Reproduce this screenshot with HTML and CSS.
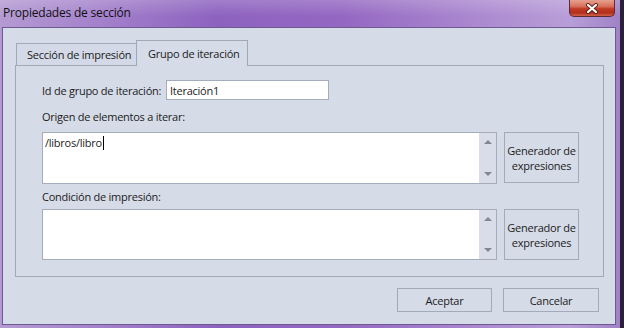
FILE: index.html
```html
<!DOCTYPE html>
<html lang="es">
<head>
    <meta charset="UTF-8">
    <title>Propiedades de sección</title>
    <link rel="stylesheet" href="styles.css">
</head>
<body>
    <div class="window">
        <div class="titlebar">
            <span class="title">Propiedades de sección</span>
            <div class="close">
                <svg width="16" height="11" viewBox="0 0 16 11">
                    <path d="M4 2 L12 9 M12 2 L4 9" stroke="#5a1f1a" stroke-width="4" stroke-linecap="round"/>
                    <path d="M4 2 L12 9 M12 2 L4 9" stroke="#ffffff" stroke-width="2.2" stroke-linecap="round"/>
                </svg>
            </div>
        </div>
        <div class="client">
            <div class="tabs">
                <div class="tab">Sección de impresión</div>
                <div class="tab active">Grupo de iteración</div>
            </div>
            <div class="panel">
                <div class="field-row">
                    <span class="field-label">Id de grupo de iteración:</span>
                    <div class="input">Iteración1</div>
                </div>
                <div class="label first">Origen de elementos a iterar:</div>
                <div class="editor-row tall">
                    <div class="textbox">
                        <div class="text">/libros/libro<span class="caret"></span></div>
                        <div class="scrollbar"><span class="arrow up"></span><span class="arrow down"></span></div>
                    </div>
                    <button class="btn gen">Generador de<br>expresiones</button>
                </div>
                <div class="label second">Condición de impresión:</div>
                <div class="editor-row">
                    <div class="textbox">
                        <div class="text"></div>
                        <div class="scrollbar"><span class="arrow up"></span><span class="arrow down"></span></div>
                    </div>
                    <button class="btn gen">Generador de<br>expresiones</button>
                </div>
            </div>
            <div class="footer">
                <button class="btn ok">Aceptar</button>
                <button class="btn cancel">Cancelar</button>
            </div>
        </div>
    </div>
</body>
</html>
```

FILE: styles.css
```css
body {
    margin: 0;
    background-color: #2a2138;
    font-family: "Open Sans", "Noto Sans", sans-serif;
    font-size: 11px;
    letter-spacing: -0.25px;
    color: #1b1b1b;
    white-space: nowrap;
}
.window {
    width: 620px;
    height: 328px;
    box-sizing: border-box;
    padding: 0 4px 3px 2px;
    display: flex;
    flex-direction: column;
    background: linear-gradient(90deg, #b49ad2 0%, #a583cc 15%, #8d62bf 35%, #9467c2 55%, #ac8ad0 78%, #b89ed8 92%, #9f82c6 100%);
}
.titlebar {
    height: 27px;
    display: flex;
    align-items: flex-start;
    background: linear-gradient(180deg, rgba(255, 255, 255, 0.18), rgba(255, 255, 255, 0) 60%);
    margin: 0 -4px 0 -2px;
}
.title {
    margin: 6px 0 0 3px;
    font-size: 12px;
    letter-spacing: -0.2px;
    line-height: 14px;
    color: #111;
}
.close {
    margin-left: auto;
    margin-right: 5px;
    width: 46px;
    height: 17px;
    box-sizing: border-box;
    border: 1px solid #5d2a35;
    border-top: none;
    border-radius: 0 0 5px 5px;
    background: linear-gradient(180deg, #e6a08e 0%, #d8705a 40%, #c03a22 55%, #b3301c 80%, #d0604a 100%);
    display: flex;
    align-items: center;
    justify-content: center;
}
.client {
    height: 298px;
    box-sizing: border-box;
    border: 1px solid #6e5a92;
    background-color: #d6dbe8;
    display: flex;
    flex-direction: column;
}
.tabs {
    display: flex;
    align-items: flex-end;
    height: 25px;
    margin: 12px 0 0 13px;
    position: relative;
    z-index: 1;
}
.tab {
    height: 22px;
    box-sizing: border-box;
    border: 1px solid #a1a9b8;
    border-bottom: none;
    padding: 3px 0 0 10px;
    width: 120px;
    border-right: none;
    background-color: #d3d9e6;
}
.tab.active {
    width: 112px;
    height: 26px;
    margin-bottom: -1px;
    border-right: 1px solid #a1a9b8;
    padding: 5px 0 0 11px;
    background-color: #d6dbe8;
}
.panel {
    margin: 0 11px 0 12px;
    border: 1px solid #a1a9b8;
    padding: 14px 0 16px 26px;
}
.field-row {
    display: flex;
    align-items: center;
    height: 20px;
}
.field-label {
    width: 124px;
}
.input {
    width: 163px;
    height: 20px;
    box-sizing: border-box;
    border: 1px solid #a5adbc;
    background-color: #fff;
    padding: 2px 0 0 3px;
    line-height: 15px;
}
.label {
    height: 16px;
    line-height: 16px;
}
.label.first {
    margin-top: 9px;
}
.label.second {
    margin-top: 5px;
}
.editor-row {
    display: flex;
    gap: 7px;
    height: 51px;
    margin-top: 4px;
}
.editor-row.tall {
    height: 52px;
    margin-top: 7px;
}
.textbox {
    width: 455px;
    box-sizing: border-box;
    border: 1px solid #a5adbc;
    background-color: #fff;
    display: flex;
}
.text {
    flex: 1;
    padding: 3px 0 0 2px;
    line-height: 14px;
}
.caret {
    display: inline-block;
    width: 1px;
    height: 14px;
    background-color: #000;
    vertical-align: -3px;
    margin-left: 1px;
}
.scrollbar {
    width: 17px;
    background-color: #d8dde9;
    display: flex;
    flex-direction: column;
    justify-content: space-between;
    align-items: center;
    padding: 7px 0;
}
.arrow {
    width: 0;
    height: 0;
    border-left: 4px solid transparent;
    border-right: 4px solid transparent;
}
.arrow.up {
    border-bottom: 4px solid #7e8797;
}
.arrow.down {
    border-top: 4px solid #7e8797;
}
.btn {
    font-family: inherit;
    font-size: 11px;
    letter-spacing: -0.25px;
    color: #1b1b1b;
    background-color: #d6dbe8;
    border: 1px solid #a3abba;
    padding: 0;
    line-height: 15px;
}
.btn.gen {
    width: 75px;
    height: 51px;
}
.footer {
    display: flex;
    justify-content: flex-end;
    gap: 11px;
    padding: 11px 16px 0 0;
}
.btn.ok {
    width: 95px;
    height: 24px;
}
.btn.cancel {
    width: 96px;
    height: 24px;
}
```
